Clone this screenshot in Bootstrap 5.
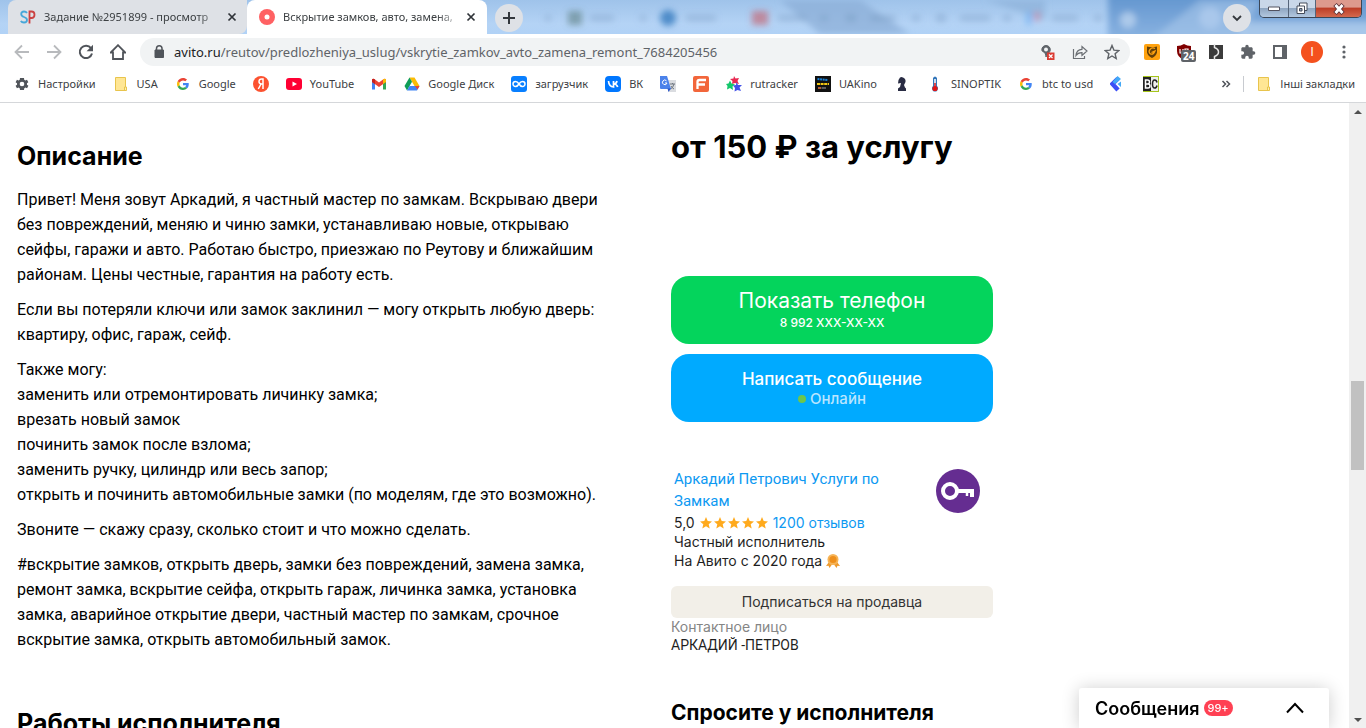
<!DOCTYPE html>
<html lang="ru">
<head>
<meta charset="utf-8">
<meta name="viewport" content="width=device-width, initial-scale=1">
<title>Вскрытие замков, авто, замена, ремонт</title>
<link href="https://cdn.jsdelivr.net/npm/bootstrap@5.3.0/dist/css/bootstrap.min.css" rel="stylesheet">
<script src="https://cdn.jsdelivr.net/npm/bootstrap@5.3.0/dist/js/bootstrap.bundle.min.js" defer></script>
<style>
  :root { --ui: "Noto Sans", "Open Sans", sans-serif; --page: Inter, "Open Sans", sans-serif; }
  body { font-family: var(--page); color: #000; background: #fff; }
  svg { display: block; flex: none; }
  button { font-family: inherit; }
  .plain { border: 0; background: none; padding: 0; display: flex; align-items: center; justify-content: center; }

  /* browser window */
  .chrome { font-family: var(--ui); font-size: 11px; line-height: 16px; color: #3c4043; }
  .tabstrip {
    height: 34px; position: relative;
    background: linear-gradient(180deg, #9fc3ea, #b4d3f5 70%, #b1d2f6);
  }
  .sky { position: absolute; inset: 0; width: 100%; height: 100%; }
  .tab-item { height: 34px; position: relative; }
  .tab-item .tab-title { white-space: nowrap; flex: 1; color: #3c4043;
    -webkit-mask-image: linear-gradient(90deg, #000 88%, transparent 103%); mask-image: linear-gradient(90deg, #000 88%, transparent 103%); }
  .tab-back { width: 239px; background: #dee1e6; border-radius: 8px 0 8px 0; margin-left: 8px; padding: 0 10px 0 12px; }
  .tab-front { width: 240px; background: #fff; border-radius: 8px 8px 0 0; padding: 0 11px 0 12px; }
  .round-btn { width: 28px; height: 28px; border-radius: 50%; background: #dee1e6; }
  .win-controls { width: 103px; height: 18px; border: 1px solid #3b4656; border-top: 0; border-radius: 0 0 5px 5px; overflow: hidden; }
  .win-controls button { height: 17px; background: linear-gradient(#c9d7e8 0 45%, #8fa6c1 50%, #b3c8df); border-right: 1px solid #56657a; }
  .win-controls .win-min { width: 29px; }
  .win-controls .win-max { width: 27px; }
  .win-controls .win-close { flex: 1; background: linear-gradient(#dd9a8d 0 40%, #bd3f28 50%, #d4694e); border-right: 0; }
  .toolbar { height: 36px; padding: 0 14px; gap: 14px; }
  .end-tools { gap: 13px; }
  .address { height: 28px; border-radius: 14px; background: #f1f3f4; padding: 0 10px 0 12px; font-size: 13px; line-height: 20px; }
  .address label { color: #202124; }
  .address input { border: 0; outline: 0; background: none; padding: 0; min-width: 0; color: #5f6368; }
  .avatar { width: 22px; height: 22px; border-radius: 50%; background: #f4511e; color: #fff; font-family: var(--page); font-size: 12px; }
  .ext-count { position: absolute; left: 5px; top: 9px; background: #5f6368; color: #fff; font-weight: 700; font-size: 10px; line-height: 12px; border-radius: 2px; padding: 0 2px; }
  .bookmarks { height: 33px; padding: 0 11px 4px 14px; gap: 17px; border-bottom: 1px solid #d5d7da; }
  .bookmarks a { display: flex; align-items: center; gap: 8px; color: #3c4043; text-decoration: none; white-space: nowrap; }
  .divider { width: 1px; height: 16px; background: #c8cbd0; }

  /* scroll bar */
  .scroll-rail { width: 17px; background: #f0f0f0; }
  .scroll-thumb { height: 89px; margin: 0 2px; background: #c1c1c1; }
  .rail-above { flex: 52; }
  .rail-below { flex: 48; }

  /* advert */
  .view { min-height: 0; }
  .advert { padding: 0 17px; gap: 50px; }
  .story { width: 604px; font-family: Roboto, "Open Sans", sans-serif; font-size: 16px; line-height: 25px; padding-top: 38px; }
  .story p { margin: 0 0 10px; }
  .story h2 { font-family: var(--page); font-size: 25px; line-height: 30px; font-weight: 700; margin: 0 0 16px; }
  .story h2.works { margin-top: 56px; }
  .side { width: 322px; padding-top: 24px; font-size: 14px; line-height: 19px; }
  .price { font-size: 31px; line-height: 40px; font-weight: 700; margin: 0 0 109px; white-space: nowrap; }
  .action { display: block; width: 100%; height: 68px; border: 0; border-radius: 18px; color: #fff; padding: 0; margin-bottom: 10px; }
  .action-call { background: #04d45c; }
  .action-write { background: #0af; margin-bottom: 46px; }
  .action .big { font-size: 21px; line-height: 26px; }
  .action .mid { font-size: 17px; line-height: 22px; font-weight: 500; }
  .action .tiny { font-size: 12px; line-height: 18px; font-weight: 500; }
  .action .status { font-size: 15px; line-height: 18px; color: #b9e5ff; font-weight: 500; }
  .dot { width: 8px; height: 8px; border-radius: 50%; background: #6dc64b; }
  .seller { padding: 0 12px 0 3px; color: #1f1f1f; }
  .seller a { color: #0d99f2; text-decoration: none; }
  .seller .who { font-family: Roboto, "Open Sans", sans-serif; font-size: 15px; line-height: 22px; }
  .seller .who-row { height: 45px; }
  .follow { width: 100%; height: 32px; border: 0; border-radius: 6px; background: #f2efe8; color: #333; margin-top: 16px; padding: 0 0 2px; }
  .contact { line-height: 18px; color: #1f1f1f; }
  .contact .hint { color: #858585; }
  .contact .person { font-family: Roboto, "Open Sans", sans-serif; }
  .ask { font-size: 21px; line-height: 26px; font-weight: 700; margin: 46px 0 0; }
  .messages { position: fixed; right: 37px; bottom: 0; width: 250px; height: 40px; background: #fff; border: 0; border-radius: 3px 3px 0 0; padding: 0 25px 0 16px; box-shadow: 0 1px 18px rgba(0,0,0,.2); font-size: 18px; font-weight: 600; }
  .unread { background: #ff4053; color: #fff; font-size: 11px; line-height: 16px; font-weight: 500; border-radius: 8px; padding: 0 4px; }
</style>
</head>
<body>
<svg width="0" height="0" class="position-absolute" aria-hidden="true">
  <symbol id="g" viewBox="0 0 48 48">
    <path fill="#ea4335" d="M24 9.500c3.500 0 6.700 1.200 9.200 3.600l6.900-6.900C35.900 2.400 30.500 0 24 0 14.600 0 6.500 5.400 2.600 13.200l8 6.200C12.400 13.700 17.700 9.500 24 9.500z"/>
    <path fill="#4285f4" d="M47 24.500c0-1.600-.2-3.100-.4-4.500H24v9h12.900c-.6 3-2.300 5.500-4.800 7.200l7.700 6C44.400 38 47 31.800 47 24.500z"/>
    <path fill="#fbbc05" d="M10.500 28.600A14.500 14.500 0 0 1 9.800 24c0-1.600.3-3.100.8-4.600l-8-6.200A24 24 0 0 0 0 24c0 3.900.9 7.500 2.600 10.800z"/>
    <path fill="#34a853" d="M24 48c6.500 0 11.900-2.100 15.900-5.800l-7.700-6c-2.200 1.500-4.900 2.300-8.200 2.300-6.300 0-11.600-4.200-13.500-9.900l-8 6.200C6.500 42.600 14.600 48 24 48z"/>
  </symbol>
  <symbol id="folder" viewBox="0 0 16 16">
    <path d="M2.500 1.500h10v10h1v3h-11z" fill="#ffe694" stroke="#e8c44d"/><path d="M11.500 14v-3h2v3" fill="#fff0b0" stroke="#e8c44d"/>
  </symbol>
  <symbol id="x" viewBox="0 0 10 10"><path d="M1.500 1.500l7 7m0-7l-7 7" stroke="#2f3338" stroke-width="1.700"/></symbol>
  <symbol id="star" viewBox="0 0 12 12"><path fill="#ffaa1d" d="M6 0l1.700 4 4.300.4-3.300 2.800 1 4.300L6 9.200l-3.700 2.300 1-4.300L0 4.400 4.300 4z"/></symbol>
</svg>

<div class="d-flex flex-column vh-100 overflow-hidden">
  <header class="chrome flex-shrink-0">
    <div class="tabstrip d-flex align-items-start">
      <svg class="sky" viewBox="0 0 1366 34" preserveAspectRatio="none" aria-hidden="true">
        <defs><filter id="haze" x="-20%" y="-50%" width="140%" height="200%"><feGaussianBlur stdDeviation="3"/></filter>
        <linearGradient id="deep" x2="0" y2="1"><stop stop-color="#5f93cd"/><stop offset="1" stop-color="#8db5e3"/></linearGradient></defs>
        <g filter="url(#haze)">
          <path d="M780 0h80l50 34h-90z" fill="#89add5" opacity=".7"/><path d="M985 0h60v20z" fill="#89add5" opacity=".6"/>
          <path d="M1108 -8h280v50h-280z" fill="url(#deep)"/>
          <path d="M1150 40l50-40h60l-20 40z" fill="#a6c6ea" opacity=".6"/><path d="M1240 22h140v20h-140z" fill="#b7d2ee" opacity=".7"/>
          <g opacity=".55"><path d="M568 11h14v14h-14z" fill="#577777"/><circle cx="668" cy="18" r="8" fill="#0b57a8"/><path d="M752 11h16v14h-16z" fill="#c8505a"/>
          <path d="M545 15h6v6h-6zM640 15h6v6h-6zM686 15h30v6h-30zM590 15h24v6h-24zM778 15h28v6h-28zM820 15h8v6h-8zM846 14h10v8h-10zM870 15h26v6h-26zM912 15h8v6h-8zM936 14h10v8h-10zM960 15h30v6h-30zM1003 15h8v6h-8zM1052 15h26v6h-26zM1094 15h8v6h-8z" fill="#7596be" opacity=".7"/>
          <path d="M1026 12h6v13h-6z" fill="#61aaf3"/><path d="M1034 12h6v9h-6z" fill="#d57c95"/></g>
          <circle cx="1128" cy="20" r="8" fill="#b9d2ee" opacity=".8"/><circle cx="1210" cy="18" r="11" fill="#a9c7eb"/>
        </g>
      </svg>
      <div class="tab-item tab-back d-flex align-items-center gap-2">
        <svg width="16" height="16" viewBox="0 0 16 16" aria-hidden="true" fill="none" stroke-width="1.800"><path d="M7 4Q6 2.500 4 2.500 1.200 2.500 1.200 5 1.200 7 4 8 7 9 7 11 7 13.500 4 13.500 1.800 13.500 .8 12" stroke="#46a7d9"/><path d="M9.500 14.500V2.500h2q3 0 3 3.200T11.500 9H9.500" stroke="#cb4242"/></svg>
        <span class="tab-title">Задание №2951899 - просмотр</span>
        <button class="plain" aria-label="Закрыть вкладку"><svg width="10" height="10"><use href="#x"/></svg></button>
      </div>
      <div class="tab-item tab-front d-flex align-items-center gap-2">
        <svg width="16" height="16" viewBox="0 0 16 16" aria-hidden="true"><circle cx="8" cy="8" r="8" fill="#ff6163"/><circle cx="8" cy="8" r="2.500" fill="#fff"/></svg>
        <span class="tab-title">Вскрытие замков, авто, замена,</span>
        <button class="plain" aria-label="Закрыть вкладку"><svg width="10" height="10"><use href="#x"/></svg></button>
      </div>
      <button class="plain round-btn position-relative ms-2 mt-1" aria-label="Новая вкладка"><svg width="14" height="14" viewBox="0 0 14 14"><path d="M7 1v12M1 7h12" stroke="#33373c" stroke-width="2"/></svg></button>
      <button class="plain round-btn position-relative ms-auto me-2 mt-1" aria-label="Поиск вкладок"><svg width="12" height="12" viewBox="0 0 12 12"><path d="M2 4l4 4 4-4" fill="none" stroke="#33373c" stroke-width="1.800"/></svg></button>
      <div class="win-controls position-relative d-flex me-1">
        <button class="plain win-min" aria-label="Свернуть"><svg width="14" height="6" viewBox="0 0 14 6"><path d="M1.500 1h11v3.500h-11z" fill="#fff" stroke="#52525f"/></svg></button>
        <button class="plain win-max" aria-label="Развернуть"><svg width="14" height="13" viewBox="0 0 14 13"><path d="M4.500 1h7.500v7.500H4.500z" fill="#fff" stroke="#454c5a"/><path d="M2 4h7.500v7.500H2z" fill="#fff" stroke="#454c5a"/><path d="M4.500 6.500h2.500v2.500H4.500z" fill="#91a6bf" stroke="#454c5a"/></svg></button>
        <button class="plain win-close" aria-label="Закрыть"><svg width="14" height="12" viewBox="0 0 14 12"><path d="M3 1.500l8 9m0-9l-8 9" stroke="#5b3036" stroke-width="4.500"/><path d="M3.500 2l7 8m0-8l-7 8" stroke="#fff" stroke-width="2.800"/></svg></button>
      </div>
    </div>

    <div class="toolbar d-flex align-items-center">
      <div class="d-flex gap-3">
        <button class="plain" aria-label="Назад"><svg width="16" height="16" viewBox="0 0 16 16" fill="none" stroke="#b8babd" stroke-width="1.800"><path d="M15 8H2M8 1.500L1.500 8 8 14.500"/></svg></button>
        <button class="plain" aria-label="Вперёд"><svg width="16" height="16" viewBox="0 0 16 16" fill="none" stroke="#b8babd" stroke-width="1.800"><path d="M1 8h13M8 1.500L14.500 8 8 14.500"/></svg></button>
        <button class="plain" aria-label="Обновить"><svg width="16" height="16" viewBox="0 0 16 16"><path d="M13 4.200A6.200 6.200 0 1 0 14 9.500" fill="none" stroke="#50545a" stroke-width="2"/><path d="M15 .8v6.400H8.600z" fill="#50545a"/></svg></button>
        <button class="plain" aria-label="Домой"><svg width="16" height="16" viewBox="0 0 16 16"><path d="M.8 8.500L8 1.200l7.200 7.300H13V15H3V8.500z" fill="none" stroke="#50545a" stroke-width="1.800"/></svg></button>
      </div>
      <div class="address d-flex align-items-center flex-grow-1">
        <svg width="14" height="14" viewBox="-1 0 14 14" class="me-2" aria-hidden="true"><path d="M2 5h8.500v7.500H2z" fill="#50545a" stroke="#50545a" stroke-linejoin="round"/><path d="M3.500 5V3.500a2.700 2.700 0 0 1 5.500 0V5" fill="none" stroke="#50545a" stroke-width="1.500"/></svg>
        <label for="url">avito.ru</label><input id="url" class="flex-grow-1" type="text" value="/reutov/predlozheniya_uslug/vskrytie_zamkov_avto_zamena_remont_7684205456">
        <div class="d-flex align-items-center gap-3">
          <button class="plain" aria-label="Геоданные заблокированы"><svg width="16" height="16" viewBox="0 0 16 16"><path d="M6 1.500A4.200 4.200 0 0 1 10.300 5.700C10.300 8.500 7.500 9.500 6 13 5.500 10.500 5.500 9 4 8.200 2.500 7.500 1.800 7 1.800 5.700A4.200 4.200 0 0 1 6 1.500z" fill="#60646a" stroke="#60646a"/><circle cx="6" cy="5.500" r="2" fill="#f1f3f4"/><path d="M7 8.500h7.500V16H7z" fill="#db3b32"/><path d="M9 10.500l3.500 3.500m0-3.500L9 14" stroke="#fff" stroke-width="1.200"/></svg></button>
          <button class="plain" aria-label="Поделиться"><svg width="16" height="16" viewBox="0 0 16 16" fill="none" stroke="#6a6e73" stroke-width="1.200"><path d="M1.500 5v9.500h11V12"/><path d="M4 11.500C4.300 7.500 6.500 5.500 10 5.300V2.500l5 4.500-5 4.500V8.600C7.500 8.500 5.500 9.300 4 11.500z"/></svg></button>
          <button class="plain" aria-label="Добавить в закладки"><svg width="16" height="16" viewBox="0 0 16 16"><path d="M8 1.500l1.900 4.600 4.900.4-3.700 3.200 1.100 4.800L8 12l-4.200 2.500 1.100-4.800L1.200 6.500l4.900-.4z" fill="none" stroke="#5f6368" stroke-width="1.400"/></svg></button>
        </div>
      </div>
      <div class="d-flex gap-3">
        <button class="plain" aria-label="Блокировщик"><svg width="16" height="16" viewBox="0 0 16 16"><rect width="16" height="16" rx="2" fill="#ffa20f"/><path d="M3 2.500q5 1.500 10 0v6Q12 12 8 14 4 12 3 8.500z" fill="#633f08"/><path d="M11 4.500Q8 3 6 5.500T6.500 10q3 1 4.500-3L7.500 8.500" fill="none" stroke="#ffa20f" stroke-width="1.300"/></svg></button>
        <button class="plain position-relative" aria-label="uBlock"><svg width="16" height="16" viewBox="0 0 16 16"><path d="M8 0q3 2 7 2v5q0 6-7 9-7-3-7-9V2q4 0 7-2z" fill="#800000"/><path d="M4 5v4h3V5m2 5V5h3v3H9" fill="none" stroke="#fff" stroke-width="1.200"/></svg><span class="ext-count">24</span></button>
        <button class="plain" aria-label="Расширение"><svg width="16" height="16" viewBox="0 0 16 16"><path d="M1 1h14v14H1z" fill="#3b3b3b"/><path d="M6.500 0v3.500q4 1.500 4 4.500t-4 4.500V16" fill="none" stroke="#e8e8e8" stroke-width="1.500"/></svg></button>
        <button class="plain" aria-label="Расширения"><svg width="16" height="16" viewBox="0 0 24 24"><path fill="#5f6368" d="M20.500 11H19V7c0-1.100-.9-2-2-2h-4V3.500a2.500 2.500 0 0 0-5 0V5H4c-1.100 0-2 .9-2 2v3.800h1.500a2.700 2.700 0 0 1 0 5.400H2V20c0 1.100.9 2 2 2h3.800v-1.500a2.700 2.700 0 0 1 5.400 0V22H17c1.100 0 2-.9 2-2v-4h1.500a2.500 2.500 0 0 0 0-5z"/></svg></button>
        <div class="end-tools d-flex align-items-center">
          <button class="plain" aria-label="Боковая панель"><svg width="16" height="16" viewBox="0 0 16 16"><path d="M1 1h14v14H1z" fill="#5f6368"/><path d="M3 3h7v10H3z" fill="#fff"/></svg></button>
          <button class="plain avatar flex-shrink-0" aria-label="Профиль">I</button>
          <button class="plain" aria-label="Меню"><svg width="16" height="16" viewBox="0 0 16 16" fill="#5f6368"><circle cx="8" cy="3" r="1.600"/><circle cx="8" cy="8" r="1.600"/><circle cx="8" cy="13" r="1.600"/></svg></button>
        </div>
      </div>
    </div>

    <nav class="bookmarks d-flex align-items-center" aria-label="Закладки">
      <a href="#"><svg width="16" height="16" viewBox="0 0 24 24"><path fill="#50545a" fill-rule="evenodd" d="M19.400 13l.1-1-.1-1 2.100-1.700-2-3.500-2.500 1-1.700-1L15 3H9l-.4 2.800-1.700 1-2.500-1-2 3.500L4.600 11l-.1 1 .1 1-2.200 1.700 2 3.500 2.500-1 1.700 1L9 21h6l.4-2.800 1.700-1 2.500 1 2-3.500zM12 15.500a3.500 3.500 0 1 1 0-7 3.500 3.500 0 0 1 0 7z"/></svg>Настройки</a>
      <a href="#"><svg width="16" height="16"><use href="#folder"/></svg>USA</a>
      <a href="#"><svg width="16" height="16" viewBox="-8 -8 64 64"><use href="#g" width="48" height="48"/></svg>Google</a>
      <a href="#" aria-label="Яндекс"><svg width="16" height="16" viewBox="0 0 16 16"><circle cx="8" cy="8" r="8" fill="#fc5230"/><path d="M10 13V3H8.500Q6 3 6 5.600 6 8 8.500 8H10M8 8l-2.700 5" fill="none" stroke="#fff" stroke-width="1.500"/></svg></a>
      <a href="#"><svg width="16" height="16" viewBox="0 0 16 16"><rect y="2" width="16" height="12" rx="3" fill="#ff0033"/><path d="M6.500 5.500v5L11 8z" fill="#fff"/></svg>YouTube</a>
      <a href="#" aria-label="Gmail"><svg width="16" height="16" viewBox="0 0 16 16"><path d="M1 4v9.500h3V7z" fill="#4285f4"/><path d="M12 7v6.500h3V4z" fill="#34a853"/><path d="M1 3.500q1-1.500 3 0l4 3 4-3q2-1.500 3 0V6l-7 5-7-5z" fill="#ea4335"/><path d="M12 3.500q2-1.500 3 0V6l-3 2z" fill="#fbbc04"/><path d="M1 3.500q1-1.500 3 0V8L1 6z" fill="#c5221f"/></svg></a>
      <a href="#"><svg width="16" height="16" viewBox="0 0 16 16"><path d="M5.500 1.500h5L15.500 10h-5z" fill="#fbbc04"/><path d="M5.500 1.500L.5 10 3 14.500 8 5.800z" fill="#0f9d58"/><path d="M5.500 10h10L13 14.500H3z" fill="#4285f4"/><path d="M11 10h4.500l-2 3.500z" fill="#ea4335"/></svg>Google Диск</a>
      <a href="#"><svg width="16" height="16" viewBox="0 0 16 16"><rect width="16" height="16" rx="3" fill="#087fff"/><path d="M8 8Q6.500 5.500 4.500 5.500a2.500 2.500 0 0 0 0 5Q6.500 10.500 8 8t3.500-2.500a2.500 2.500 0 0 1 0 5Q9.500 10.500 8 8z" fill="none" stroke="#fff" stroke-width="1.500"/></svg>загрузчик</a>
      <a href="#"><svg width="16" height="16" viewBox="0 0 16 16"><rect width="16" height="16" rx="4" fill="#07f"/><path d="M3.500 5Q4 10.800 8.500 11V5m0 3q3-.2 3.500-3M8.700 8q3 0 4 3" fill="none" stroke="#fff" stroke-width="1.700"/></svg>ВК</a>
      <a href="#" aria-label="Переводчик"><svg width="16" height="16" viewBox="0 0 16 16"><path d="M7 4h9v12H9z" fill="#dadce0"/><path d="M10 8h5M12.500 7v1m1.500 0q-1 4-3.500 5m.5-3q1 2 3 3" fill="none" stroke="#6f7780"/><path d="M0 0h7l4 13H1q-1 0-1-1z" fill="#4b82ea"/><path d="M7.500 12.500h3.500L8.500 16z" fill="#2a56c6"/><path d="M6.500 4.800A2.300 2.300 0 1 0 7 7H5" fill="none" stroke="#fff"/></svg></a>
      <a href="#" aria-label="F"><svg width="16" height="16" viewBox="0 0 16 16"><rect width="16" height="16" rx="2" fill="#f2663b"/><path d="M13 4H6.500Q4.500 4 4.500 6v7M5 8.500h7" fill="none" stroke="#fff" stroke-width="2.300"/></svg></a>
      <a href="#"><svg width="16" height="16" viewBox="0 0 16 16"><path d="M8 0l1.500 2.500L13 2l-1.500 3 1.500 3-4-1-3 1 .5-3L4 3l3.500-.5z" fill="#e82951"/><path d="M4 4.500l1.500 3L9 8.500 6.500 10.500 7 14l-3-2-3 1.500L1.500 10 0 8l2.500-.5z" fill="#14c76b"/><path d="M10.500 6l1.500 3h4l-2.500 2.500L15 15l-3.500-1-3 1.500.5-3.500-2-2.500 3-.5z" fill="#4252e8"/></svg>rutracker</a>
      <a href="#"><svg width="16" height="16" viewBox="0 0 16 16"><path d="M0 0h16v16H0z" fill="#111"/><path d="M2.500 3l10.500 1" stroke="#1c83d8" stroke-width="2" stroke-dasharray="2 .6"/><path d="M2 8h12" stroke="#f3c814" stroke-width="2" stroke-dasharray="3 .6"/><path d="M3 12h3" stroke="#b85e36" stroke-width="2"/><path d="M6.500 12H11" stroke="#aaa"/></svg>UAKino</a>
      <a href="#" aria-label="Шахматы"><svg width="16" height="16" viewBox="0 0 16 16"><path d="M6 1.500L7.500 1 9 1.500q3 1 2.500 4.500L10 9l1 2.500 1 1V15H4v-2.500l2-1.500 1-4-3 .5L4.500 4z" fill="#292c43"/></svg></a>
      <a href="#"><svg width="16" height="16" viewBox="0 0 16 16"><path d="M6 2q2-3 4 0v8q2 2 0 5-2 1-4 0-2-3 0-5z" fill="#3275b9"/><path d="M8 3v8" stroke="#fff" stroke-width="1.500"/><circle cx="8" cy="12.500" r="2.600" fill="#df1717"/><path d="M8 7v6" stroke="#df1717" stroke-width="1.500"/></svg>SINOPTIK</a>
      <a href="#"><svg width="16" height="16" viewBox="-8 -8 64 64"><use href="#g" width="48" height="48"/></svg>btc to usd</a>
      <a href="#" aria-label="Обмен"><svg width="16" height="16" viewBox="0 0 16 16"><path d="M8 2.500L2.500 8 8 14" fill="none" stroke="#3b4ff6" stroke-width="4.500"/><path d="M7.500 0L11 3 5 8 2.500 6zM7.500 8L11 5.500V11z" fill="#43a9f7"/></svg></a>
      <a href="#" aria-label="BC"><svg width="16" height="16" viewBox="0 0 16 16"><path d="M0 0h16v16H0z" fill="#a6c51c"/><path d="M0 1h8v14H0z" fill="#222"/><path d="M8 1h7v14H8z" fill="#eee"/><path d="M2.500 4h2q2 0 2 2t-2 2h-2zm0 4h2.500q2 0 2 2t-2 2H2.500z" fill="none" stroke="#fff" stroke-width="1.500"/><path d="M14 6.500Q13.500 4 11.700 4 9.500 4 9.500 8t2.200 4q1.800 0 2.300-2.500" fill="none" stroke="#222" stroke-width="1.500"/></svg></a>
      <div class="ms-auto d-flex align-items-center gap-2">
        <button class="plain me-1" aria-label="Ещё закладки"><svg width="10" height="10" viewBox="0 0 10 10"><path d="M1.500 2l3 3-3 3m4-6l3 3-3 3" fill="none" stroke="#50545a" stroke-width="1.500"/></svg></button>
        <span class="divider me-1"></span>
        <a href="#" lang="uk"><svg width="16" height="16"><use href="#folder"/></svg>Інші закладки</a>
      </div>
    </nav>
  </header>

  <div class="view d-flex flex-grow-1">
    <main class="advert d-flex flex-grow-1 overflow-hidden">
      <article class="story flex-shrink-0">
        <h2>Описание</h2>
        <p>Привет! Меня зовут Аркадий, я частный мастер по замкам. Вскрываю двери<br>без повреждений, меняю и чиню замки, устанавливаю новые, открываю<br>сейфы, гаражи и авто. Работаю быстро, приезжаю по Реутову и ближайшим<br>районам. Цены честные, гарантия на работу есть.</p>
        <p>Если вы потеряли ключи или замок заклинил — могу открыть любую дверь:<br>квартиру, офис, гараж, сейф.</p>
        <p>Также могу:<br>заменить или отремонтировать личинку замка;<br>врезать новый замок<br>починить замок после взлома;<br>заменить ручку, цилиндр или весь запор;<br>открыть и починить автомобильные замки (по моделям, где это возможно).</p>
        <p>Звоните — скажу сразу, сколько стоит и что можно сделать.</p>
        <p>#вскрытие замков, открыть дверь, замки без повреждений, замена замка,<br>ремонт замка, вскрытие сейфа, открыть гараж, личинка замка, установка<br>замка, аварийное открытие двери, частный мастер по замкам, срочное<br>вскрытие замка, открыть автомобильный замок.</p>
        <h2 class="works">Работы исполнителя</h2>
      </article>

      <aside class="side flex-shrink-0">
        <p class="price">от 150 ₽ за услугу</p>
        <button class="action action-call"><span class="big d-block">Показать телефон</span><span class="tiny d-block">8 992 XXX-XX-XX</span></button>
        <button class="action action-write"><span class="mid d-block">Написать сообщение</span><span class="status d-flex align-items-center justify-content-center gap-1"><span class="dot"></span>Онлайн</span></button>

        <section class="seller">
          <div class="who-row d-flex justify-content-between align-items-start">
            <a class="who" href="#">Аркадий Петрович Услуги по<br>Замкам</a>
            <svg width="46" height="46" viewBox="0 0 46 46" role="img" aria-label="Ключ"><circle cx="23" cy="23" r="22" fill="#652d91"/><circle cx="15" cy="23" r="7" fill="none" stroke="#fff" stroke-width="4"/><path d="M22 23h17M37 23v6" stroke="#fff" stroke-width="4" fill="none"/><path d="M32 23v5" stroke="#fff" stroke-width="2.500"/></svg>
          </div>
          <div class="d-flex align-items-center">5,0
            <span class="d-flex mx-1" role="img" aria-label="5 из 5"><svg width="14" height="12"><use href="#star"/></svg><svg width="14" height="12"><use href="#star"/></svg><svg width="14" height="12"><use href="#star"/></svg><svg width="14" height="12"><use href="#star"/></svg><svg width="14" height="12"><use href="#star"/></svg></span>
            <a href="#">1200 отзывов</a></div>
          <div>Частный исполнитель</div>
          <div class="d-flex align-items-center">На Авито с 2020 года
            <svg class="ms-1" width="14" height="14" viewBox="0 0 14 14" aria-hidden="true"><path d="M3 8l-3 4 2.500-.3L3.500 14 6 10.500h2l2.500 3.500 1-2.300L14 12l-3-4z" fill="#ed9a2d"/><circle cx="7" cy="5.500" r="5.500" fill="#f6b457"/><circle cx="7" cy="5.500" r="3.600" fill="#ee8f1c"/></svg></div>
        </section>
        <button class="follow">Подписаться на продавца</button>
        <div class="contact"><div class="hint">Контактное лицо</div><div class="person">АРКАДИЙ -ПЕТРОВ</div></div>
        <h2 class="ask">Спросите у исполнителя</h2>
      </aside>
    </main>

    <div class="scroll-rail d-flex flex-column flex-shrink-0" aria-hidden="true">
      <svg width="17" height="17" viewBox="0 0 17 17"><path d="M5 11l4-4 4 4z" fill="#505050"/></svg>
      <div class="d-flex flex-column flex-grow-1">
        <div class="rail-above"></div><div class="scroll-thumb"></div><div class="rail-below"></div>
      </div>
      <svg width="17" height="17" viewBox="0 0 17 17"><path d="M5 7l4 4 4-4z" fill="#505050"/></svg>
    </div>
  </div>
</div>

<button class="messages d-flex align-items-center gap-1"><span>Сообщения</span><span class="unread">99+</span>
  <svg class="ms-auto" width="18" height="12" viewBox="0 0 18 12" aria-hidden="true"><path d="M1 10.500L9 2l8 8.500" fill="none" stroke="#000" stroke-width="2"/></svg></button>
</body>
</html>
